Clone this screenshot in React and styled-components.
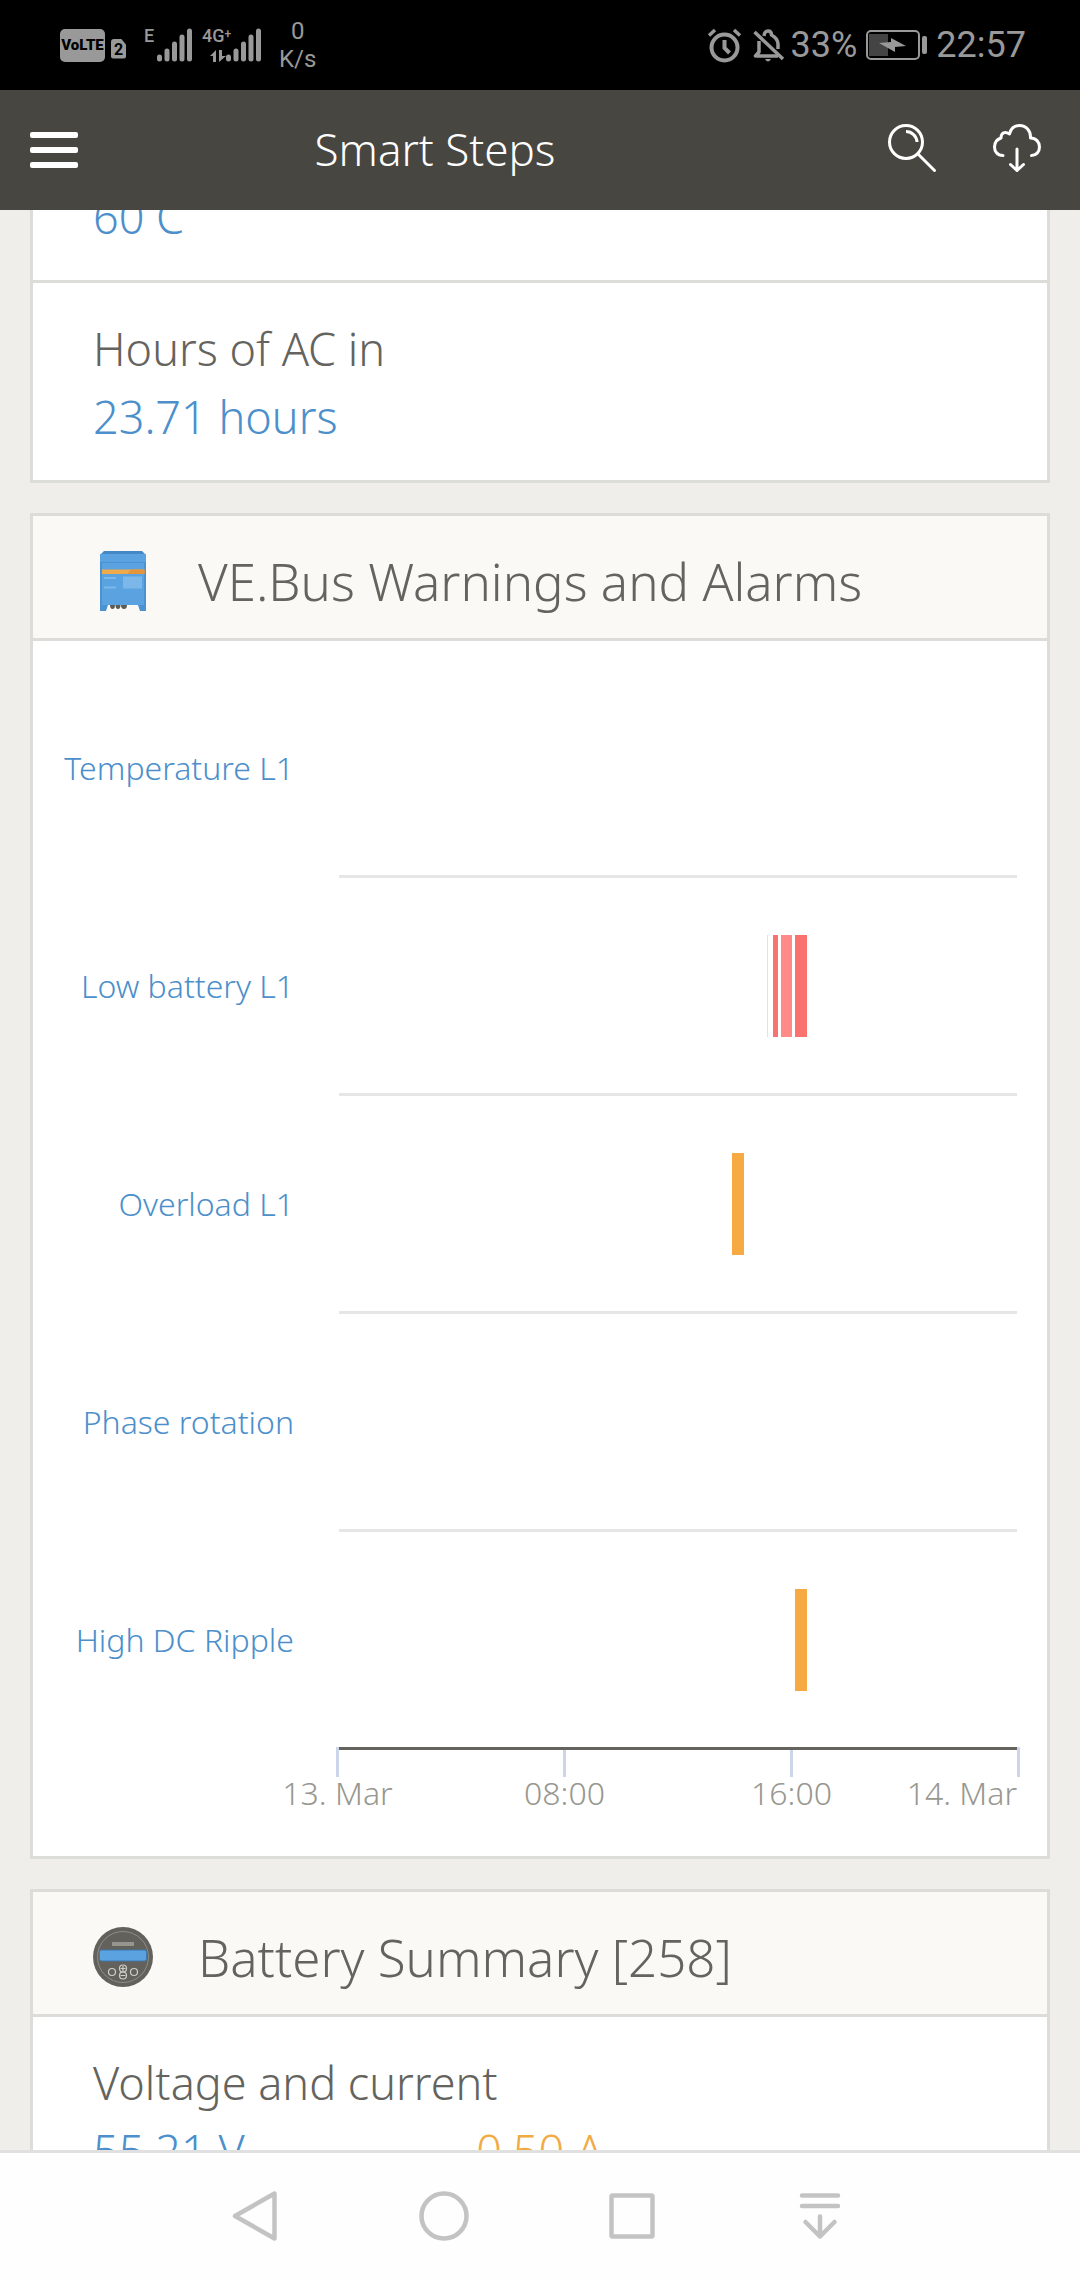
import React from "react";
import styled, { createGlobalStyle } from "styled-components";

const colors = {
  page: "#efeeea",
  border: "#dcdcd8",
  header: "#faf9f5",
  text: "#64635d",
  muted: "#989790",
  blue: "#4c8fcb",
  orange: "#f0ab45",
  status: "#999999",
  nav: "#c3c3c3",
};

const GlobalStyle = createGlobalStyle`
  *, *::before, *::after { box-sizing: border-box; }
  body { margin: 0; background: ${colors.page}; }
  h1, h2, dl, dt, dd, ul { margin: 0; padding: 0; font-weight: inherit; list-style: none; }
  svg { display: block; flex: none; overflow: visible; }
`;

const Screen = styled.div`
  display: flex;
  flex-direction: column;
  height: 100vh;
  font-family: "Noto Sans", "Open Sans", sans-serif;
  font-weight: 300;
  color: ${colors.text};
`;

/* ---------- Status bar ---------- */

const StatusBar = styled.div`
  display: flex;
  align-items: center;
  justify-content: space-between;
  flex: none;
  height: 90px;
  padding: 0 54px 0 60px;
  background: #000;
  color: ${colors.status};
  font-family: Roboto, sans-serif;
  font-weight: 400;
`;

const StatusGroup = styled.div`
  display: flex;
  align-items: center;
  gap: ${(p) => p.$gap}px;
  font-size: 36px;
  line-height: 40px;
`;

const Badges = styled.div`
  display: flex;
  align-items: flex-end;
  gap: 6px;
`;

const VolteBadge = styled.span`
  width: 45px;
  height: 33px;
  border-radius: 5px;
  background: ${colors.status};
  color: #000;
  font: 900 15px/33px Roboto, sans-serif;
  text-align: center;
`;

const SimBadge = styled.span`
  width: 15px;
  height: 20px;
  margin-bottom: 3px;
  border-radius: 3px;
  background: ${colors.status};
  clip-path: polygon(0 0, 66% 0, 100% 30%, 100% 100%, 0 100%);
  color: #000;
  font: 700 16px/21px Roboto, sans-serif;
  text-align: center;
`;

const Signal = styled.div`
  display: flex;
  height: 34px;
`;

const Network = styled.div`
  display: flex;
  flex-direction: column;
  justify-content: space-between;
  width: ${(p) => p.$width}px;
  font: 500 18px/16px Roboto, sans-serif;
  white-space: nowrap;

  sup {
    font-size: 12px;
    line-height: 1;
    vertical-align: 4px;
  }

  svg {
    align-self: flex-end;
  }
`;

const Speed = styled.div`
  font-size: 24px;
  line-height: 28px;
  text-align: center;
`;

const SignalBars = () => (
  <svg width="35" height="34" viewBox="0 0 35 34" stroke={colors.status} strokeWidth="5" strokeLinecap="round" aria-hidden="true">
    <path d="M2.5 29v2M10 23v8M17.5 16v15M25 9v22M32.5 3v28" />
  </svg>
);

const DataArrows = () => (
  <svg width="16" height="12" viewBox="0 0 16 12" fill={colors.status} aria-hidden="true">
    <path d="M0 6 6 0v12H3V6zM9 0v12l7-6h-4V0z" />
  </svg>
);

const AlarmIcon = () => (
  <svg width="33" height="33" viewBox="0 0 33 33" fill="none" stroke={colors.status} strokeWidth="4" aria-hidden="true">
    <circle cx="16.5" cy="18.5" r="13" />
    <path d="M16.5 11v8l5 5" />
    <path d="M1 6.5 7 1M32 6.5 26 1" strokeWidth="3.5" />
  </svg>
);

const MutedIcon = () => (
  <svg width="32" height="33" viewBox="1 0 32 33" fill="none" stroke={colors.status} strokeWidth="3.5" strokeLinejoin="round" aria-hidden="true">
    <path d="M5.5 3 34 30" />
    <path d="M10 12v11l-3.500 4H29" />
    <path d="M15 7q.5-5 4-5t3.500 4q6 3 6.500 9v5" />
    <path d="M16 30h6q-3 5-6 0z" fill={colors.status} stroke="none" />
  </svg>
);

const BatteryIcon = () => (
  <svg width="61" height="30" viewBox="0 0 61 30" aria-hidden="true">
    <rect x="1" y="1" width="52" height="28" rx="4" fill="none" stroke={colors.status} strokeWidth="2" />
    <rect x="3" y="4" width="19" height="22" fill="#444" />
    <path d="M13 13 25 12V8l15 8-11 1v5z" fill={colors.status} />
    <rect x="56" y="6" width="5" height="18" rx="2" fill={colors.status} />
  </svg>
);

/* ---------- Toolbar ---------- */

const Toolbar = styled.header`
  display: flex;
  align-items: center;
  flex: none;
  height: 120px;
  padding: 0 39px 0 30px;
  background: #474641;
  color: #fff;
`;

const IconButton = styled.button`
  display: flex;
  align-items: center;
  justify-content: center;
  padding: 0;
  border: 0;
  background: none;
  color: inherit;
  cursor: pointer;
`;

const AppTitle = styled.h1`
  flex: 1;
  padding-bottom: 2px;
  font-size: 44px;
  line-height: 60px;
  text-align: center;
`;

const Actions = styled.div`
  display: flex;
  gap: 57px;
  padding: 0 0 6px 96px;
`;

const MenuIcon = () => (
  <svg width="48" height="36" viewBox="0 0 48 36" fill="currentColor" aria-hidden="true">
    <rect width="48" height="6" rx="2" />
    <rect y="15" width="48" height="6" rx="2" />
    <rect y="30" width="48" height="6" rx="2" />
  </svg>
);

const SearchIcon = () => (
  <svg width="48" height="49" viewBox="0 0 48 49" fill="none" stroke="currentColor" strokeWidth="3" strokeLinecap="round" aria-hidden="true">
    <circle cx="18" cy="19" r="16.500" />
    <path d="M30 31 46.500 47.500" />
    <path d="M18 8.500a11 11 0 0 1 11 10.500" strokeLinecap="butt" />
  </svg>
);

const CloudDownloadIcon = () => (
  <svg width="48" height="49" viewBox="0 0 48 49" fill="none" stroke="currentColor" strokeWidth="3" strokeLinecap="round" strokeLinejoin="round" aria-hidden="true">
    <path d="M10 32.500C4 32.500 1.500 28 1.500 24C1.500 19 5 16 8 15C8 9.500 12 8 16.500 11C18 5 22 2.500 26.500 2.500C33 2.500 38 7.500 37.500 15C43 15 46.500 19 46.500 24C46.500 29 43 32.500 38.500 32.500" />
    <path d="M24 26v21.500M17.500 41.500l6.500 6 6.500-6" />
  </svg>
);

/* ---------- Content ---------- */

const Content = styled.main`
  flex: 1;
  min-height: 0;
  overflow: hidden;
  background: ${colors.page};
`;

const Feed = styled.div`
  display: flex;
  flex-direction: column;
  gap: 30px;
  margin-top: -30px;
  padding: 0 30px;
`;

const Card = styled.section`
  border: 3px solid ${colors.border};
  background: #fff;
`;

const CardHeader = styled.header`
  display: flex;
  align-items: center;
  gap: 45px;
  padding: 35px 60px 27px;
  border-bottom: 3px solid ${colors.border};
  background: ${colors.header};
`;

const CardTitle = styled.h2`
  font-size: 51px;
  line-height: 58px;
`;

const Reading = styled.dl`
  padding: ${(p) => (p.$continued ? "0" : "32px")} 60px 29px;
  font-size: 45px;
  line-height: 68px;

  & + & {
    border-top: 3px solid ${colors.border};
  }
`;

const Values = styled.div`
  display: grid;
  grid-template-columns: 3fr 4fr;
`;

const Value = styled.dd`
  color: ${(p) => (p.$accent ? colors.orange : colors.blue)};
`;

const InverterIcon = () => (
  <svg width="60" height="60" viewBox="0 0 60 60" aria-hidden="true">
    <path d="M11 0h38l4 4H7z" fill="#4489c6" />
    <path d="M7 3h46v51H7z" fill="#5aa3e0" />
    <path d="M7 11h46v1H7zM7 11h2v43H7zM51 11h2v43h-2zM7 54h8l-2 6H7zM45 54h8v6h-6z" fill="#4a92d2" />
    <path d="M9 18.500h42.500V23H9z" fill="#efab49" />
    <path d="M38 18.500h13.500V23H34z" fill="#e5953b" />
    <path d="M11 26h12v2H11zM11 35.500h12v2H11zM30 25.500h19v12H30z" fill="#7cb7e9" />
    <path d="M17 54h5q0 4-2.500 4T17 54zM22.500 54h5q0 4-2.500 4t-2.500-4zM28 54h6q0 4-3 4t-3-4z" fill="#5c5b56" />
  </svg>
);

const MonitorIcon = () => (
  <svg width="60" height="60" viewBox="0 0 60 60" fill="none" aria-hidden="true">
    <circle cx="30" cy="30" r="30" fill="#62615b" />
    <circle cx="30" cy="30" r="25.500" stroke="#8d8c87" />
    <rect x="19" y="15" width="22" height="4" fill="#96958f" />
    <rect x="6.500" y="23" width="47" height="11" rx="2" fill="#5aa3e0" stroke="#3f79ae" />
    <g stroke="#cfcfcb" strokeWidth="1.200">
      <circle cx="19" cy="45" r="3.500" />
      <circle cx="41" cy="45" r="3.500" />
      <circle cx="30" cy="41.500" r="3.500" />
      <circle cx="30" cy="48.500" r="3.500" />
      <path d="M27.500 41.500h5M30 39v5M27.500 48.500h5" />
    </g>
  </svg>
);

/* ---------- Alarm timeline ---------- */

const DAY_MINUTES = 1440;

const Timeline = styled.div`
  padding: 19px 30px 47px 0;
`;

const Lane = styled.div`
  display: grid;
  grid-template-columns: 261px 1fr;
  column-gap: 45px;
  height: 218px;
`;

const LaneLabel = styled.div`
  align-self: center;
  padding-bottom: 3px;
  color: ${colors.blue};
  font-size: 32px;
  line-height: 44px;
  text-align: right;
  white-space: nowrap;
`;

const LanePlot = styled.div`
  position: relative;
  border-bottom: 3px solid ${(p) => (p.$last ? colors.text : "#e6e6e6")};
`;

const EventBar = styled.div`
  position: absolute;
  top: 57px;
  bottom: 56px;
  background: ${(p) => p.$color};
`;

const Axis = styled.ul`
  display: flex;
  justify-content: space-between;
  margin: -3px -3px 0 303px;
`;

const Tick = styled.li`
  display: flex;
  flex-direction: column;
  align-items: ${(p) => (p.$end ? "flex-end" : "center")};
  width: 3px;
  color: ${colors.muted};
  font-size: 32px;
  line-height: 32px;
  white-space: nowrap;

  &::before {
    content: "";
    width: 3px;
    height: ${(p) => (p.$edge ? 30 : 27)}px;
    margin-top: ${(p) => (p.$edge ? 0 : 3)}px;
    background: #ccd6e8;
  }
`;

const TickLabel = styled.span`
  padding-right: ${(p) => (p.$end ? 3 : 0)}px;
`;

const lanes = [
  { label: "Temperature L1", events: [] },
  {
    label: "Low battery L1",
    events: [
      { start: 909, length: 2, color: "#f3dcdf" },
      { start: 922, length: 11, color: "#fa7270" },
      { start: 939, length: 23, color: "#ff8a88" },
      { start: 968, length: 26, color: "#fa7270" },
    ],
  },
  { label: "Overload L1", events: [{ start: 835, length: 25, color: "#f6aa41" }] },
  { label: "Phase rotation", events: [] },
  { label: "High DC Ripple", events: [{ start: 968, length: 26, color: "#f6aa41" }] },
];

const percent = (minutes) => `${(minutes / DAY_MINUTES) * 100}%`;

const AlarmTimeline = () => (
  <Timeline>
    {lanes.map((lane, index) => (
      <Lane key={lane.label}>
        <LaneLabel>{lane.label}</LaneLabel>
        <LanePlot $last={index === lanes.length - 1}>
          {lane.events.map((event) => (
            <EventBar
              key={event.start}
              $color={event.color}
              style={{ left: percent(event.start), width: percent(event.length) }}
            />
          ))}
        </LanePlot>
      </Lane>
    ))}
    <Axis>
      <Tick $edge>
        <TickLabel>13. Mar</TickLabel>
      </Tick>
      <Tick>
        <TickLabel>08:00</TickLabel>
      </Tick>
      <Tick>
        <TickLabel>16:00</TickLabel>
      </Tick>
      <Tick $edge $end>
        <TickLabel $end>14. Mar</TickLabel>
      </Tick>
    </Axis>
  </Timeline>
);

/* ---------- System navigation ---------- */

const NavBar = styled.nav`
  display: flex;
  flex: none;
  height: 130px;
  padding: 0 0 2px 15%;
  border-top: 3px solid #e0e0e0;
  background: #fefefe;
  color: ${colors.nav};
`;

const NavButton = styled(IconButton)`
  flex: 0 1 188px;
`;

const NavIcon = ({ children }) => (
  <svg width="50" height="50" viewBox="0 0 50 50" fill="none" stroke="currentColor" strokeWidth="4.500" strokeLinejoin="round" strokeLinecap="round" aria-hidden="true">
    {children}
  </svg>
);

export default function App() {
  return (
    <>
      <GlobalStyle />
      <Screen>
        <StatusBar>
          <StatusGroup $gap={18}>
            <Badges>
              <VolteBadge>VoLTE</VolteBadge>
              <SimBadge>2</SimBadge>
            </Badges>
            <StatusGroup $gap={10}>
              <Signal>
                <Network $width={13}>E</Network>
                <SignalBars />
              </Signal>
              <Signal>
                <Network $width={24}>
                  <span>
                    4G<sup>+</sup>
                  </span>
                  <DataArrows />
                </Network>
                <SignalBars />
              </Signal>
            </StatusGroup>
            <Speed>
              0
              <br />
              K/s
            </Speed>
          </StatusGroup>
          <StatusGroup $gap={9}>
            <AlarmIcon />
            <MutedIcon />
            <span>33%</span>
            <BatteryIcon />
            <span>22:57</span>
          </StatusGroup>
        </StatusBar>

        <Toolbar>
          <IconButton aria-label="Menu">
            <MenuIcon />
          </IconButton>
          <AppTitle>Smart Steps</AppTitle>
          <Actions>
            <IconButton aria-label="Search">
              <SearchIcon />
            </IconButton>
            <IconButton aria-label="Download">
              <CloudDownloadIcon />
            </IconButton>
          </Actions>
        </Toolbar>

        <Content>
          <Feed>
            <Card>
              <Reading $continued>
                <Value>60 C</Value>
              </Reading>
              <Reading>
                <dt>Hours of AC in</dt>
                <Value>23.71 hours</Value>
              </Reading>
            </Card>

            <Card>
              <CardHeader>
                <InverterIcon />
                <CardTitle>VE.Bus Warnings and Alarms</CardTitle>
              </CardHeader>
              <AlarmTimeline />
            </Card>

            <Card>
              <CardHeader>
                <MonitorIcon />
                <CardTitle>Battery Summary [258]</CardTitle>
              </CardHeader>
              <Reading>
                <dt>Voltage and current</dt>
                <Values>
                  <Value>55.21 V</Value>
                  <Value $accent>0.50 A</Value>
                </Values>
              </Reading>
            </Card>
          </Feed>
        </Content>

        <NavBar>
          <NavButton aria-label="Back">
            <NavIcon>
              <path d="M43.500 2.500v45L4 25z" />
            </NavIcon>
          </NavButton>
          <NavButton aria-label="Home">
            <NavIcon>
              <circle cx="25" cy="25" r="22.500" />
            </NavIcon>
          </NavButton>
          <NavButton aria-label="Recent apps">
            <NavIcon>
              <rect x="4.500" y="4.500" width="41" height="41" rx="1" />
            </NavIcon>
          </NavButton>
          <NavButton aria-label="Notifications">
            <NavIcon>
              <path d="M7 4.500h36M7 15h36M25 25.500v20M10.500 31 25 45.500 39.500 31" />
            </NavIcon>
          </NavButton>
        </NavBar>
      </Screen>
    </>
  );
}
